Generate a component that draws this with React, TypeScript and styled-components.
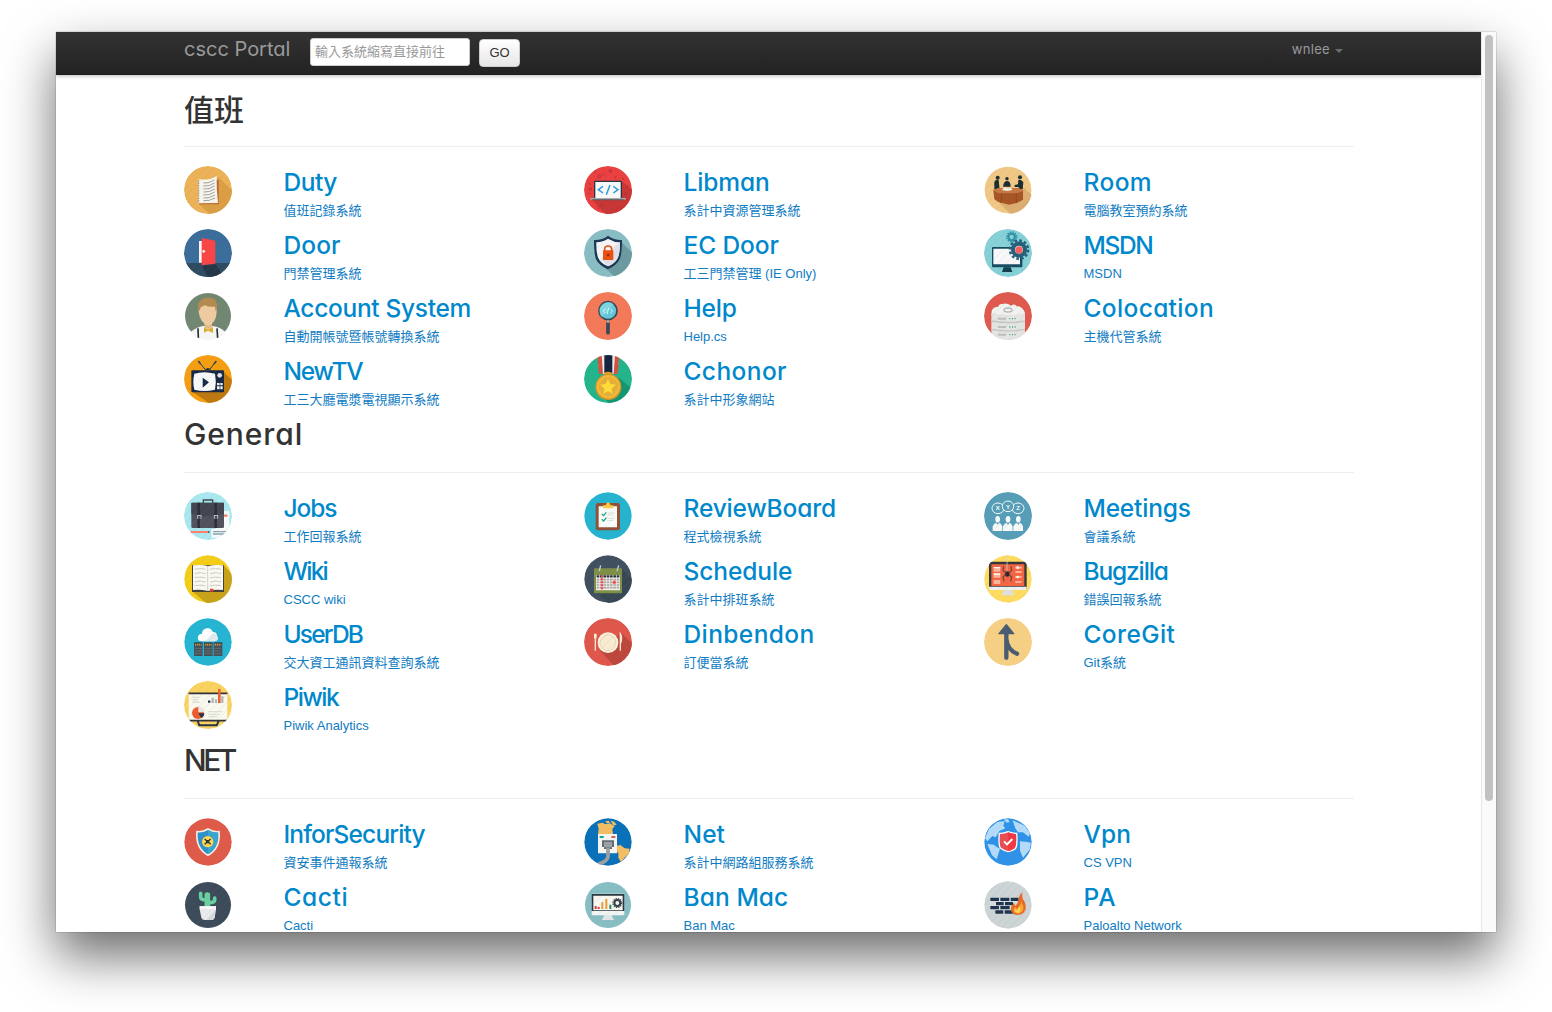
import React from 'react';
import styled, { createGlobalStyle } from 'styled-components';

const GlobalStyle = createGlobalStyle`
  *, *::before, *::after { box-sizing: border-box; }
  html, body { margin: 0; padding: 0; background: #fff; overflow: hidden; }
`;

const geometric = `Inter, 'Noto Sans CJK TC', sans-serif`;
const body = `'Liberation Sans', 'Noto Sans CJK TC', sans-serif`;

const Desktop = styled.div`
  width: 1552px;
  height: 1012px;
  padding: 32px 56px 80px;
  background: #fff;
  overflow: hidden;
`;

const Window = styled.div`
  display: flex;
  width: 1440px;
  height: 900px;
  background: #fff;
  box-shadow: 0 0 1px rgba(0, 0, 0, 0.55), 0 24px 48px rgba(0, 0, 0, 0.58);
`;

const Viewport = styled.div`
  flex: 1;
  min-width: 0;
  height: 900px;
  overflow: hidden;
`;

const ScrollTrack = styled.div`
  width: 15px;
  padding: 3px 3px 0;
  background: #fafafa;
  border-left: 1px solid #e7e7e7;
`;

const ScrollThumb = styled.div`
  width: 8px;
  height: 766px;
  border-radius: 4px;
  background: #c1c1c1;
`;

const Navbar = styled.header`
  height: 43px;
  padding-left: 128px;
  padding-right: 138px;
  display: flex;
  align-items: flex-start;
  background: linear-gradient(#333, #222);
  border-bottom: 1px solid #1b1b1b;
  box-shadow: 0 1px 4px rgba(0, 0, 0, 0.28);
`;

const Brand = styled.a`
  width: 126px;
  padding-top: 4px;
  font: 400 20px/26px ${geometric};
  font-feature-settings: 'cv11';
  white-space: nowrap;
  color: #999;
`;

const Search = styled.input`
  width: 160px;
  height: 28px;
  margin: 6px 9px 0 0;
  padding: 0 4px 2px;
  font: 13px/20px ${body};
  border: 1px solid #ccc;
  border-radius: 3px;
  background: #fff;
  &::placeholder { color: #999; opacity: 1; }
`;

const GoButton = styled.button`
  width: 41px;
  height: 28px;
  margin-top: 7px;
  padding: 0;
  font: 13px/20px ${body};
  color: #333;
  border: 1px solid #ccc;
  border-radius: 4px;
  background: linear-gradient(#fff, #e6e6e6);
`;

const UserMenu = styled.a`
  display: flex;
  align-items: center;
  gap: 5px;
  margin-left: auto;
  padding-top: 7px;
  font: 400 13px/20px ${geometric};
  font-feature-settings: 'cv11';
  letter-spacing: 0.3px;
  color: #999;
`;

const Caret = styled.span`
  margin-top: 3px;
  border: 4px solid transparent;
  border-top-color: #6d6d6d;
  border-bottom: 0;
`;

const Main = styled.main`
  padding: 17px 0 0 128px;
`;

const Heading = styled.h1<{ $tracking: number }>`
  width: 1170px;
  height: 55px;
  margin: 0 0 19px;
  border-bottom: 1px solid #eee;
  font: 500 30px/${(p) => (p.$tracking ? 32 : 36)}px ${geometric};
  font-feature-settings: 'cv11';
  letter-spacing: ${(p) => p.$tracking}px;
  color: #333;
`;

const Grid = styled.div`
  display: grid;
  grid-template-columns: repeat(3, 400px);
  grid-auto-rows: 63px;
`;

const Entry = styled.a`
  display: grid;
  grid-template-columns: 99.5px 1fr;
  color: #08c;
`;

const Round = styled.svg`
  display: block;
  width: 48px;
  height: 48px;
  border-radius: 50%;
`;

const Title = styled.h3<{ $tracking: number }>`
  margin: 0;
  font: 500 24.5px/32px ${geometric};
  font-feature-settings: 'cv11';
  letter-spacing: ${(p) => p.$tracking}px;
  white-space: nowrap;
`;

const Note = styled.p`
  margin: 3px 0 0;
  font: 13px/20px ${body};
  color: #0f7cc3;
  white-space: nowrap;
`;

const Disc = ({ fill, r = 72 }: { fill: string; r?: number }) => <circle cx="72" cy="72" r={r} fill={fill} />;

const Gear = ({ x, y, r, fill, hole }: { x: number; y: number; r: number; fill: string; hole: string }) => (
  <g transform={`translate(${x} ${y})`}>
    <circle r={r * 0.78} fill={fill} />
    <circle r={r * 0.88} fill="none" stroke={fill} strokeWidth={r * 0.24} strokeDasharray={`${r * 0.26} ${r * 0.2}`} />
    <circle r={r * 0.38} fill={hole} />
  </g>
);

const art: Record<string, React.ReactNode> = {
  duty: (
    <>
      <Disc fill="#ecb258" />
      <path d="M103 34L150 78V150H84L44 114Z" fill="#dc9e45" />
      <path d="M42 42H104V115H46Z" fill="#b8682f" />
      <path d="M43 40Q78 44 98 29Q97 70 102 111L44 112Z" fill="#f8f5ec" />
      <path d="M58 51Q76 53 91 42M58 60Q76 62 91 51M58 69Q76 71 92 60M58 78Q76 80 92 69M58 87Q76 89 92 78M58 96Q76 98 93 87M58 104Q76 106 93 96" stroke="#8c9298" strokeWidth="2.5" fill="none" />
      <path d="M44 42V112" stroke="#8f938e" strokeWidth="4" strokeDasharray="2 3" />
    </>
  ),
  libman: (
    <>
      <Disc fill="#e8413f" />
      <path d="M114 46L150 76V150H70L22 99Z" fill="#c63735" />
      <path d="M33 22l3-8m25 15l-7-7m38 16l5-9m24 12l-7-5M14 52l7 4m-8 28l7-3m113-22l-7 3m-30 69l5-9m-57 8l4-9M45 118l-8 4" stroke="#b83238" strokeWidth="3" />
      <g fill="none" stroke="#b83238" strokeWidth="3">
        <circle cx="46" cy="31" r="4" />
        <circle cx="79" cy="15" r="4" />
        <circle cx="19" cy="69" r="4" />
        <circle cx="125" cy="83" r="4" />
        <circle cx="55" cy="117" r="4" />
      </g>
      <rect x="30" y="44" width="84" height="55" rx="4" fill="#273848" />
      <rect x="34" y="48" width="76" height="48" fill="#f8f8f8" />
      <path d="M19 96H125V101H19Z" fill="#a9adaf" /><path d="M22 100H122L116 103H28Z" fill="#535d66" />
      <path d="M57 61L43 71L57 81M88 61L102 71L88 81M78 57L67 86" fill="none" stroke="#2e9bdc" strokeWidth="4.5" />
    </>
  ),
  room: (
    <>
      <Disc fill="#f0c785" r={70} />
      <path d="M117 64L150 92V150H84L42 106Z" fill="#dcae70" />
      <g fill="#1b2d32">
        <circle cx="41" cy="35" r="6" /><path d="M31 70V48Q35 39 44 42L47 72Z" />
        <circle cx="69" cy="38" r="5" /><path d="M57 62Q59 45 69 45Q80 45 80 62Z" />
        <circle cx="108" cy="34" r="6" /><path d="M116 69L118 49Q112 38 103 42L102 55L92 57V63H104V70Z" />
      </g>
      <path d="M28 73L40 67H106L117 73V101L98 111L75 116L43 108L31 100Z" fill="#a85526" />
      <path d="M27 73L43 66H104L118 74L100 82H43Z" fill="#c57942" />
      <path d="M53 81L50 111M97 82V111" stroke="#8b421e" strokeWidth="2" />
      <path d="M54 72L61 64L71 67L81 65L85 72L70 75Z" fill="#f8f1e5" />
    </>
  ),
  door: (
    <>
      <Disc fill="#3b6d9a" />
      <path d="M0 102H144V144H0Z" fill="#304b61" /><path d="M54 110L94 105L120 144H72Z" fill="#263746" />
      <path d="M45 36H57V101H45Z" fill="#f7f7f7" /><path d="M53 27L94 35V104L53 109Z" fill="#fb4547" />
      <circle cx="59" cy="67" r="4" fill="#fff" />
    </>
  ),
  ecdoor: (
    <>
      <Disc fill="#89bec4" />
      <path d="M107 34L150 76V150H100L50 105Z" fill="#6c9ba2" />
      <path d="M72 20Q91 34 114 33Q114 74 107 91Q98 109 72 121Q44 109 36 91Q30 74 30 33Q54 34 72 20Z" fill="#1b3855" />
      <path d="M72 29Q90 40 108 40Q108 72 101 88Q93 103 72 112Q50 103 43 88Q36 71 37 40Q57 39 72 29Z" fill="#f5f5f7" />
      <path d="M72 112Q93 103 101 88Q108 73 108 40L51 91Z" fill="#dfe1e6" />
      <rect x="57" y="64" width="31" height="29" rx="2" fill="#ec5113" />
      <path d="M62 67V60Q62 51 72.500 51Q83 51 83 60V67" fill="none" stroke="#ec5113" strokeWidth="5" />
      <path d="M69 74H76V82H69Z" fill="#9b2c0d" />
    </>
  ),
  msdn: (
    <>
      <Disc fill="#86d0d7" />
      <Gear x={83} y={24} r={17} fill="#3393a5" hole="#86d0d7" />
      <rect x="24" y="54" width="91" height="61" rx="3" fill="#174c62" /><path d="M28 59H108V106H28Z" fill="#f8f8fa" />
      <path d="M59 115H80L85 129H54Z" fill="#123e50" />
      <Gear x={105} y={62} r={31} fill="#25617a" hole="#edf4f6" /><circle cx="105" cy="63" r="11" fill="#fa6065" />
    </>
  ),
  account: (
    <>
      <Disc fill="#718771" r={69} />
      <path d="M20 120Q38 105 57 102H86Q109 105 124 120V144H20Z" fill="#f5f5f5" />
      <path d="M42 109L43 138M99 109L101 138" stroke="#283236" strokeWidth="5" />
      <path d="M61 84H84V105Q72 115 61 105Z" fill="#ddb889" />
      <path d="M44 35Q71 18 98 37V60Q97 91 73 102Q48 91 44 60Z" fill="#edcaa0" />
      <path d="M45 31Q56 13 82 17Q104 20 98 55L95 58L93 44Q75 46 62 40L50 46L47 58Q39 44 45 31Z" fill="#b38b50" />
      <path d="M60 106L72 112L87 105V123L72 116L60 122Z" fill="#ddb034" />
    </>
  ),
  help: (
    <>
      <Disc fill="#f47a59" />
      <path d="M72 93V122" stroke="#3b4654" strokeWidth="11" strokeLinecap="round" /><path d="M72 80V92" stroke="#dce0dc" strokeWidth="4" />
      <circle cx="72" cy="56" r="27" fill="#63c7d9" stroke="#344856" strokeWidth="5" />
      <path d="M46 55A26 26 0 0 1 89 37L53 75Q46 66 46 55Z" fill="#8adbe3" opacity=".7" />
      <path d="M65 50L58 57L65 64M79 50L86 57L79 64M74 47L69 67" stroke="#d9ffff" strokeWidth="3" fill="none" />
    </>
  ),
  colocation: (
    <>
      <Disc fill="#df594f" />
      <path d="M23 65V56Q28 44 43 44Q44 35 55 36Q69 32 81 41Q93 33 98 43Q114 42 122 60V70L112 144H30Z" fill="#f2f2f0" />
      <path d="M22 62Q72 76 123 62V144H22Z" fill="#e4e5e3" />
      <path d="M22 87Q72 96 123 87M22 112Q72 121 123 112" stroke="#c3c8c5" strokeWidth="4" fill="none" />
      <path d="M42 80H66M42 105H66M42 128H66" stroke="#bcc0be" strokeWidth="6" /><path d="M76 80H96M76 105H96M76 128H96" stroke="#37a38a" strokeWidth="4" strokeDasharray="3 5" />
      <ellipse cx="72" cy="54" rx="12" ry="6" fill="none" stroke="#b4b9b8" strokeWidth="4" />
    </>
  ),
  newtv: (
    <>
      <Disc fill="#f59e12" />
      <path d="M117 48L144 76V144H75L25 110Z" fill="#bd7910" />
      <path d="M45 21L65 45M95 20L76 45" stroke="#293d4a" strokeWidth="3" /><path d="M43 18L50 27M97 18L90 27" stroke="#394b56" strokeWidth="5" />
      <path d="M62 46Q72 32 81 46Z" fill="#273641" />
      <rect x="22" y="46" width="98" height="66" rx="3" fill="#172945" /><path d="M31 56Q61 47 93 56Q98 81 93 104Q61 112 31 104Q25 80 31 56Z" fill="#f8f8f8" />
      <path d="M56 68L75 82L56 98Z" fill="#142844" /><circle cx="107" cy="61" r="7" fill="#e0e4e3" />
      <path d="M99 84H107V91H99ZM109 84H116V91H109ZM99 94H107V103H99ZM109 94H116V103H109Z" fill="#f0f0ed" />
    </>
  ),
  cchonor: (
    <>
      <Disc fill="#23b58d" />
      <path d="M105 68L147 105V145H76L40 111Z" fill="#159774" />
      <path d="M40 0H106L99 57H47Z" fill="#eee" /><path d="M40 0H53L57 57H45ZM93 0H106L101 57H89Z" fill="#d45240" /><path d="M61 0H85V58H61Z" fill="#15253e" />
      <path d="M60 53Q72 48 84 53V68H60Z" fill="#d99f27" />
      <circle cx="73" cy="96" r="39" fill="#d99527" /><circle cx="73" cy="95" r="35" fill="#f2bb36" /><circle cx="73" cy="95" r="29" fill="#e6b03a" />
      <path d="M72 71L79 87L96 89L83 100L86 117L72 108L58 117L61 100L48 89L65 87Z" fill="#ffdc38" />
    </>
  ),
  jobs: (
    <>
      <Disc fill="#a9e8f1" />
      <path d="M95 57H136V137H82V111H95Z" fill="#f5fbfb" /><path d="M103 70H130M87 119H127M87 126H122" stroke="#8ba2ae" strokeWidth="4" /><path d="M119 71H130" stroke="#ff765c" strokeWidth="6" />
      <path d="M58 34V24H86V34" fill="none" stroke="#42464e" strokeWidth="4" />
      <rect x="22" y="32" width="98" height="76" rx="4" fill="#50525d" /><path d="M22 32H120V65Q72 81 22 65Z" fill="#434751" />
      <path d="M44 32V108M95 32V108" stroke="#2b303a" strokeWidth="8" /><path d="M46 69V80M96 69V80" stroke="#b7bfc4" strokeWidth="13" /><path d="M46 72V80M96 72V80" stroke="#3f4650" strokeWidth="7" />
      <path d="M20 120H72" stroke="#ff826a" strokeWidth="6" /><path d="M72 117L79 120L72 123Z" fill="#3b4654" />
    </>
  ),
  reviewboard: (
    <>
      <Disc fill="#25b5cf" r={71} />
      <rect x="35" y="33" width="73" height="82" rx="6" fill="#915238" /><path d="M44 43H99V106H44Z" fill="#fbfcfa" />
      <path d="M57 49V40H65Q72 22 80 40H88V49Z" fill="#ffc743" />
      <path d="M53 66L59 71L67 61M53 82L59 87L67 77" fill="none" stroke="#20a78e" strokeWidth="4" /><path d="M70 63H93M70 69H89M70 79H91M70 85H88" stroke="#dce0dd" strokeWidth="3" />
    </>
  ),
  meetings: (
    <>
      <Disc fill="#579eb7" />
      <g fill="#579eb7" stroke="#f4faf9" strokeWidth="3"><ellipse cx="42" cy="49" rx="18" ry="16" /><ellipse cx="102" cy="49" rx="18" ry="16" /><ellipse cx="72" cy="43" rx="17" ry="16" /></g>
      <g fill="#fff" fontFamily="Liberation Sans" fontSize="18" fontWeight="700" textAnchor="middle"><text x="41" y="55">X</text><text x="72" y="50">Y</text><text x="102" y="55">Z</text></g>
      {[41, 72, 103].map((x) => <g key={x} fill="#f6f9f8"><ellipse cx={x} cy="82" rx="7" ry="10" /><path d={`M${x - 15} 117V103Q${x - 10} 93 ${x - 4} 92L${x} 99L${x + 4} 92Q${x + 10} 93 ${x + 14} 103V117Z`} /></g>)}
    </>
  ),
  wiki: (
    <>
      <Disc fill="#f3cd18" r={71} />
      <path d="M119 31L144 58V144H66L25 109Z" fill="#c8a31a" /><path d="M24 31H120V111H24Z" fill="#44403b" />
      <path d="M27 31Q57 28 72 34Q91 28 117 31V105Q91 102 72 108Q49 102 27 105Z" fill="#faf9f2" />
      <path d="M71 33V108" stroke="#d6d2ca" strokeWidth="3" />
      <path d="M32 43Q52 38 65 43M32 55Q52 51 65 56M32 68Q52 64 65 69M32 80Q52 76 65 81M32 92Q52 88 65 93M78 43Q94 38 111 43M78 56Q94 51 111 55M78 69Q94 64 111 68M78 81Q94 76 111 80M78 93Q94 88 111 92" stroke="#cfcdc2" strokeWidth="3" fill="none" />
      <path d="M78 101H88V112L83 108L78 112Z" fill="#ef3f34" />
    </>
  ),
  schedule: (
    <>
      <Disc fill="#40515f" r={71} /><path d="M114 42L146 75V145H75L32 109Z" fill="#374854" />
      <rect x="30" y="40" width="84" height="75" rx="3" fill="#7f9047" /><path d="M36 60H108V106H36Z" fill="#f3eee7" />
      <path d="M38 64H107" stroke="#24343b" strokeWidth="7" strokeDasharray="8 2" />
      {[74, 82, 90, 98].map((y) => <path key={y} d={`M38 ${y}H107`} stroke="#a9a7a5" strokeWidth="5" strokeDasharray="8 2" />)}
      <path d="M54 61V105" stroke="#ef4652" strokeWidth="7" strokeDasharray="6 3" /><circle cx="91" cy="82" r="5" fill="#ff4a48" />
      <path d="M46 48L50 31M99 48L104 31" stroke="#c7cfd0" strokeWidth="4" />
    </>
  ),
  bugzilla: (
    <>
      <Disc fill="#ffdb61" r={71} />
      <path d="M15 22Q15 20 18 20H125Q128 20 128 23V103H15Z" fill="#34383d" /><path d="M15 95H128V105H15Z" fill="#eef0ef" /><path d="M22 28H121V93H22Z" fill="#f46643" />
      <path d="M61 105H83L92 121H52Z" fill="#e0e2df" />
      <path d="M29 38H49V50H29ZM29 56H49V68H29ZM29 75H49V87H29Z" fill="#fbb49e" /><path d="M29 38H49M29 57H49" stroke="#fff" strokeWidth="4" />
      <path d="M94 38H113M94 51H113M94 66H113M94 81H113" stroke="#ffc6b5" strokeWidth="5" /><circle cx="101" cy="38" r="4" fill="#fff" /><circle cx="101" cy="66" r="4" fill="#fff" />
      <path d="M69 0V50" stroke="#d5d9d8" strokeWidth="2" /><ellipse cx="70" cy="57" rx="7" ry="8" fill="#34262c" />
      <path d="M65 53L57 46L59 33M75 53L83 46L81 33M64 59L57 66L60 79M76 59L83 66L80 79" stroke="#7d463e" strokeWidth="4" fill="none" />
    </>
  ),
  userdb: (
    <>
      <Disc fill="#26b5d1" r={71} />
      <path d="M53 70Q39 68 42 56Q44 47 54 47Q55 32 69 31Q82 29 86 42Q97 40 99 53Q106 68 91 70Z" fill="#fff" /><path d="M89 43L62 70H91Q107 67 99 53Z" fill="#dfebee" />
      {[30, 60, 89].map((x) => <g key={x}><path d={`M${x} 74H${x + 26}V114H${x}Z`} fill="#44505a" /><path d={`M${x} 75H${x + 26}`} stroke="#26333f" strokeWidth="3" /><path d={`M${x + 3} 80H${x + 23}`} stroke="#d19c41" strokeWidth="5" strokeDasharray="4 2" /><path d={`M${x + 2} 91H${x + 24}M${x + 2} 99H${x + 24}M${x + 2} 107H${x + 24}`} stroke="#747e84" strokeWidth="2" /></g>)}
    </>
  ),
  dinbendon: (
    <>
      <Disc fill="#df574b" r={72} /><path d="M112 45L145 77V144H91L49 99Z" fill="#bd483e" />
      <circle cx="72" cy="74" r="31" fill="#fff2db" /><circle cx="72" cy="74" r="24" fill="#f9ebd2" stroke="#ddcbae" strokeWidth="2" />
      <path d="M34 62V98M109 98V47Q115 55 111 74" fill="none" stroke="#fbe9d4" strokeWidth="4" /><path d="M30 47H38V60Q34 68 30 60Z" fill="#fbe9d4" />
    </>
  ),
  coregit: (
    <>
      <Disc fill="#f5cf83" />
      <path d="M67 119V48M67 62Q70 96 99 107" fill="none" stroke="#4b5b72" strokeWidth="13" strokeLinecap="round" />
      <path d="M67 20L89 47H45Z" fill="#4b5b72" stroke="#4b5b72" strokeWidth="4" strokeLinejoin="round" />
    </>
  ),
  piwik: (
    <>
      <Disc fill="#fbd361" r={72} />
      <path d="M14 36H130V117H14Z" fill="#faf9ef" /><path d="M14 37H130M14 119H130" stroke="#31343c" strokeWidth="5" />
      <path d="M41 120L46 133H98L104 120" fill="none" stroke="#273548" strokeWidth="6" />
      <path d="M25 49H47M25 56H42M25 63H47M73 92H115M73 100H108M73 107H101" stroke="#dddfd4" strokeWidth="4" />
      <circle cx="42" cy="96" r="18" fill="#ed5c2e" /><path d="M43 94V75A19 19 0 0 1 61 94Z" fill="#e8e8df" /><path d="M43 97H61Q60 108 52 111Z" fill="#273548" />
      <path d="M86 66V50M96 66V55M115 66V46" stroke="#b4b9b9" strokeWidth="7" /><path d="M106 66V24" stroke="#ef622f" strokeWidth="8" /><path d="M72 62H79" stroke="#273548" strokeWidth="7" />
    </>
  ),
  infor: (
    <>
      <Disc fill="#df5b49" r={71} />
      <path d="M72 33Q88 43 105 41Q110 91 72 112Q34 91 39 41Q56 43 72 33Z" fill="#2f91c8" stroke="#f7eee0" strokeWidth="5" />
      <path d="M72 36Q87 45 102 44Q105 88 72 107Z" fill="#3ba5cf" /><circle cx="71" cy="71" r="17" fill="#ffd64d" />
      <path d="M62 63Q71 71 80 79M80 63Q71 71 62 79" stroke="#26323a" strokeWidth="4" /><circle cx="71" cy="71" r="5" fill="#26323a" />
    </>
  ),
  net: (
    <>
      <Disc fill="#0a70b8" r={71} />
      <path d="M40 17L56 14L64 19L78 16L92 25L85 33L87 49H42L44 32ZM79 8L91 11L98 21L88 22ZM64 10L74 8L78 14L68 16Z" fill="#f3bd63" />
      <path d="M96 84L109 81L122 91L137 92L134 107L121 120L111 132L103 119L103 105L96 98Z" fill="#f3bd63" />
      <path d="M42 48H99V106H42Z" fill="#f4f4f2" /><path d="M47 57H59" stroke="#11a78f" strokeWidth="6" /><path d="M82 57H94" stroke="#e45b5d" strokeWidth="6" />
      <path d="M54 67H90V87H84V93H60V87H54Z" fill="#656d73" /><path d="M60 72H84V88H60Z" fill="#9ba2a6" /><path d="M72 89V116Q69 132 43 138" fill="none" stroke="#9a9fa2" strokeWidth="11" />
    </>
  ),
  vpn: (
    <>
      <Disc fill="#2e93e8" r={71} />
      <path d="M15 33L40 12L62 9L58 24L64 31L46 39L35 58L25 54L10 70L3 60ZM10 78L30 80L38 87L48 92L43 108L38 124L24 112ZM86 7L122 23L138 45L134 56L117 43L102 43L94 31ZM108 70L125 71L141 74L137 95L117 119L108 98ZM59 4L72 4L77 12L68 14Z" fill="#b5ddfb" />
      <path d="M72 41Q87 47 98 46Q101 83 94 92Q83 100 72 101Q61 99 49 90Q43 79 46 46Q59 47 72 41Z" fill="#e94e52" stroke="#fff" strokeWidth="4" />
      <path d="M72 43Q87 49 96 48Q98 80 91 89Q82 97 72 99Z" fill="#f03a43" /><path d="M60 70L69 79L85 63" stroke="#fff" strokeWidth="6" fill="none" />
    </>
  ),
  cacti: (
    <>
      <Disc fill="#3d4a59" r={69} />
      <path d="M70 78V42" stroke="#6ad0a0" strokeWidth="17" strokeLinecap="round" /><path d="M50 37V48Q50 56 64 57M92 51V58Q91 64 76 65" stroke="#6ad0a0" strokeWidth="11" strokeLinecap="round" fill="none" />
      <path d="M47 76H96V85L92 110Q90 117 82 117H63Q54 117 52 110L47 85Z" fill="#ececed" /><path d="M47 76H96V83H47Z" fill="#fafafa" />
      <path d="M93 86L66 117H82Q91 116 92 107Z" fill="#d8dbdf" />
    </>
  ),
  banmac: (
    <>
      <Disc fill="#86bfc3" r={69} />
      <path d="M61 101H82L90 117H53Z" fill="#dfe6e6" /><rect x="23" y="38" width="98" height="65" rx="3" fill="#f3f5f3" /><path d="M23 39H121V90H23Z" fill="#2a3742" /><path d="M28 44H116V88H28Z" fill="#f7f7ef" />
      <path d="M35 84V75M44 84V78" stroke="#db3a3d" strokeWidth="6" /><path d="M55 84V64M67 84V54" stroke="#ed9a36" strokeWidth="6" /><path d="M79 84V71" stroke="#248c65" strokeWidth="6" />
      <Gear x={100} y={66} r={15} fill="#35414b" hole="#f7f7ef" />
    </>
  ),
  pa: (
    <>
      <Disc fill="#cdd4d5" r={71} />
      <path d="M18 50H98V99H33V87H18Z" fill="#d9dedc" />
      <g stroke="#1e344f" strokeWidth="10" fill="none"><path d="M19 55H45M49 55H76M80 55H104M36 68H59M63 68H87M19 80H45M49 80H77M34 93H58M62 93H88" /></g>
      <path d="M116 33Q111 50 121 61Q131 83 119 95Q104 106 89 99Q76 91 83 75L90 65L94 75Q104 66 103 53Q106 41 116 33Z" fill="#e96a23" />
      <path d="M112 50Q110 66 118 76Q120 92 105 98Q91 98 88 86L94 77L99 85Q112 75 112 50Z" fill="#f8aa32" /><path d="M106 75Q112 92 101 96Q91 94 94 85L99 91Z" fill="#ffdc5d" />
    </>
  ),
};

const striped = 'M-10 34L34-10M-10 58L58-10M-10 82L82-10M-10 106L106-10M-10 130L130-10M-10 154L154-10M14 154L154 14M38 154L154 38M62 154L154 62M86 154L154 86M110 154L154 110';
const plain = new Set(['coregit', 'account', 'net', 'libman']);

const Icon = ({ name }: { name: string }) => (
  <Round viewBox="0 0 144 144" aria-hidden="true">
    {art[name]}
    {!plain.has(name) && <path d={striped} stroke="#888" strokeWidth="1.5" opacity=".2" />}
  </Round>
);

type Item = [icon: string, title: string, note: string, tracking?: number];

const sections: { heading: string; tracking: number; items: Item[] }[] = [
  {
    heading: '值班',
    tracking: 0,
    items: [
      ['duty', 'Duty', '值班記錄系統', -0.5],
      ['libman', 'Libman', '系計中資源管理系統', -0.1],
      ['room', 'Room', '電腦教室預約系統', 0.4],
      ['door', 'Door', '門禁管理系統', 0.1],
      ['ecdoor', 'EC Door', '工三門禁管理 (IE Only)', -0.1],
      ['msdn', 'MSDN', 'MSDN', -1.4],
      ['account', 'Account System', '自動開帳號暨帳號轉換系統', -0.32],
      ['help', 'Help', 'Help.cs', -0.2],
      ['colocation', 'Colocation', '主機代管系統', 0.35],
      ['newtv', 'NewTV', '工三大廳電漿電視顯示系統', -1.2],
      ['cchonor', 'Cchonor', '系計中形象網站', 0.4],
    ],
  },
  {
    heading: 'General',
    tracking: 0.9,
    items: [
      ['jobs', 'Jobs', '工作回報系統', -1.1],
      ['reviewboard', 'ReviewBoard', '程式檢視系統', -0.15],
      ['meetings', 'Meetings', '會議系統', -0.2],
      ['wiki', 'Wiki', 'CSCC wiki', -1.8],
      ['schedule', 'Schedule', '系計中排班系統', -0.1],
      ['bugzilla', 'Bugzilla', '錯誤回報系統', -1.15],
      ['userdb', 'UserDB', '交大資工通訊資料查詢系統', -1.8],
      ['dinbendon', 'Dinbendon', '訂便當系統', 0.4],
      ['coregit', 'CoreGit', 'Git系統', 0.4],
      ['piwik', 'Piwik', 'Piwik Analytics', -1.5],
    ],
  },
  {
    heading: 'NET',
    tracking: -3.5,
    items: [
      ['infor', 'InforSecurity', '資安事件通報系統', -0.85],
      ['net', 'Net', '系計中網路組服務系統', 0.1],
      ['vpn', 'Vpn', 'CS VPN', 0.1],
      ['cacti', 'Cacti', 'Cacti', 0.6],
      ['banmac', 'Ban Mac', 'Ban Mac', 0.1],
      ['pa', 'PA', 'Paloalto Network', 1],
    ],
  },
];

export default function App() {
  return (
    <Desktop>
      <GlobalStyle />
      <Window>
        <Viewport>
          <Navbar>
            <Brand>cscc Portal</Brand>
            <Search placeholder="輸入系統縮寫直接前往" />
            <GoButton>GO</GoButton>
            <UserMenu>wnlee<Caret /></UserMenu>
          </Navbar>
          <Main>
            {sections.map((section) => (
              <section key={section.heading}>
                <Heading $tracking={section.tracking}>{section.heading}</Heading>
                <Grid>
                  {section.items.map(([icon, title, note, tracking = 0]) => (
                    <Entry key={icon}>
                      <Icon name={icon} />
                      <div>
                        <Title $tracking={tracking}>{title}</Title>
                        <Note>{note}</Note>
                      </div>
                    </Entry>
                  ))}
                </Grid>
              </section>
            ))}
          </Main>
        </Viewport>
        <ScrollTrack><ScrollThumb /></ScrollTrack>
      </Window>
    </Desktop>
  );
}
